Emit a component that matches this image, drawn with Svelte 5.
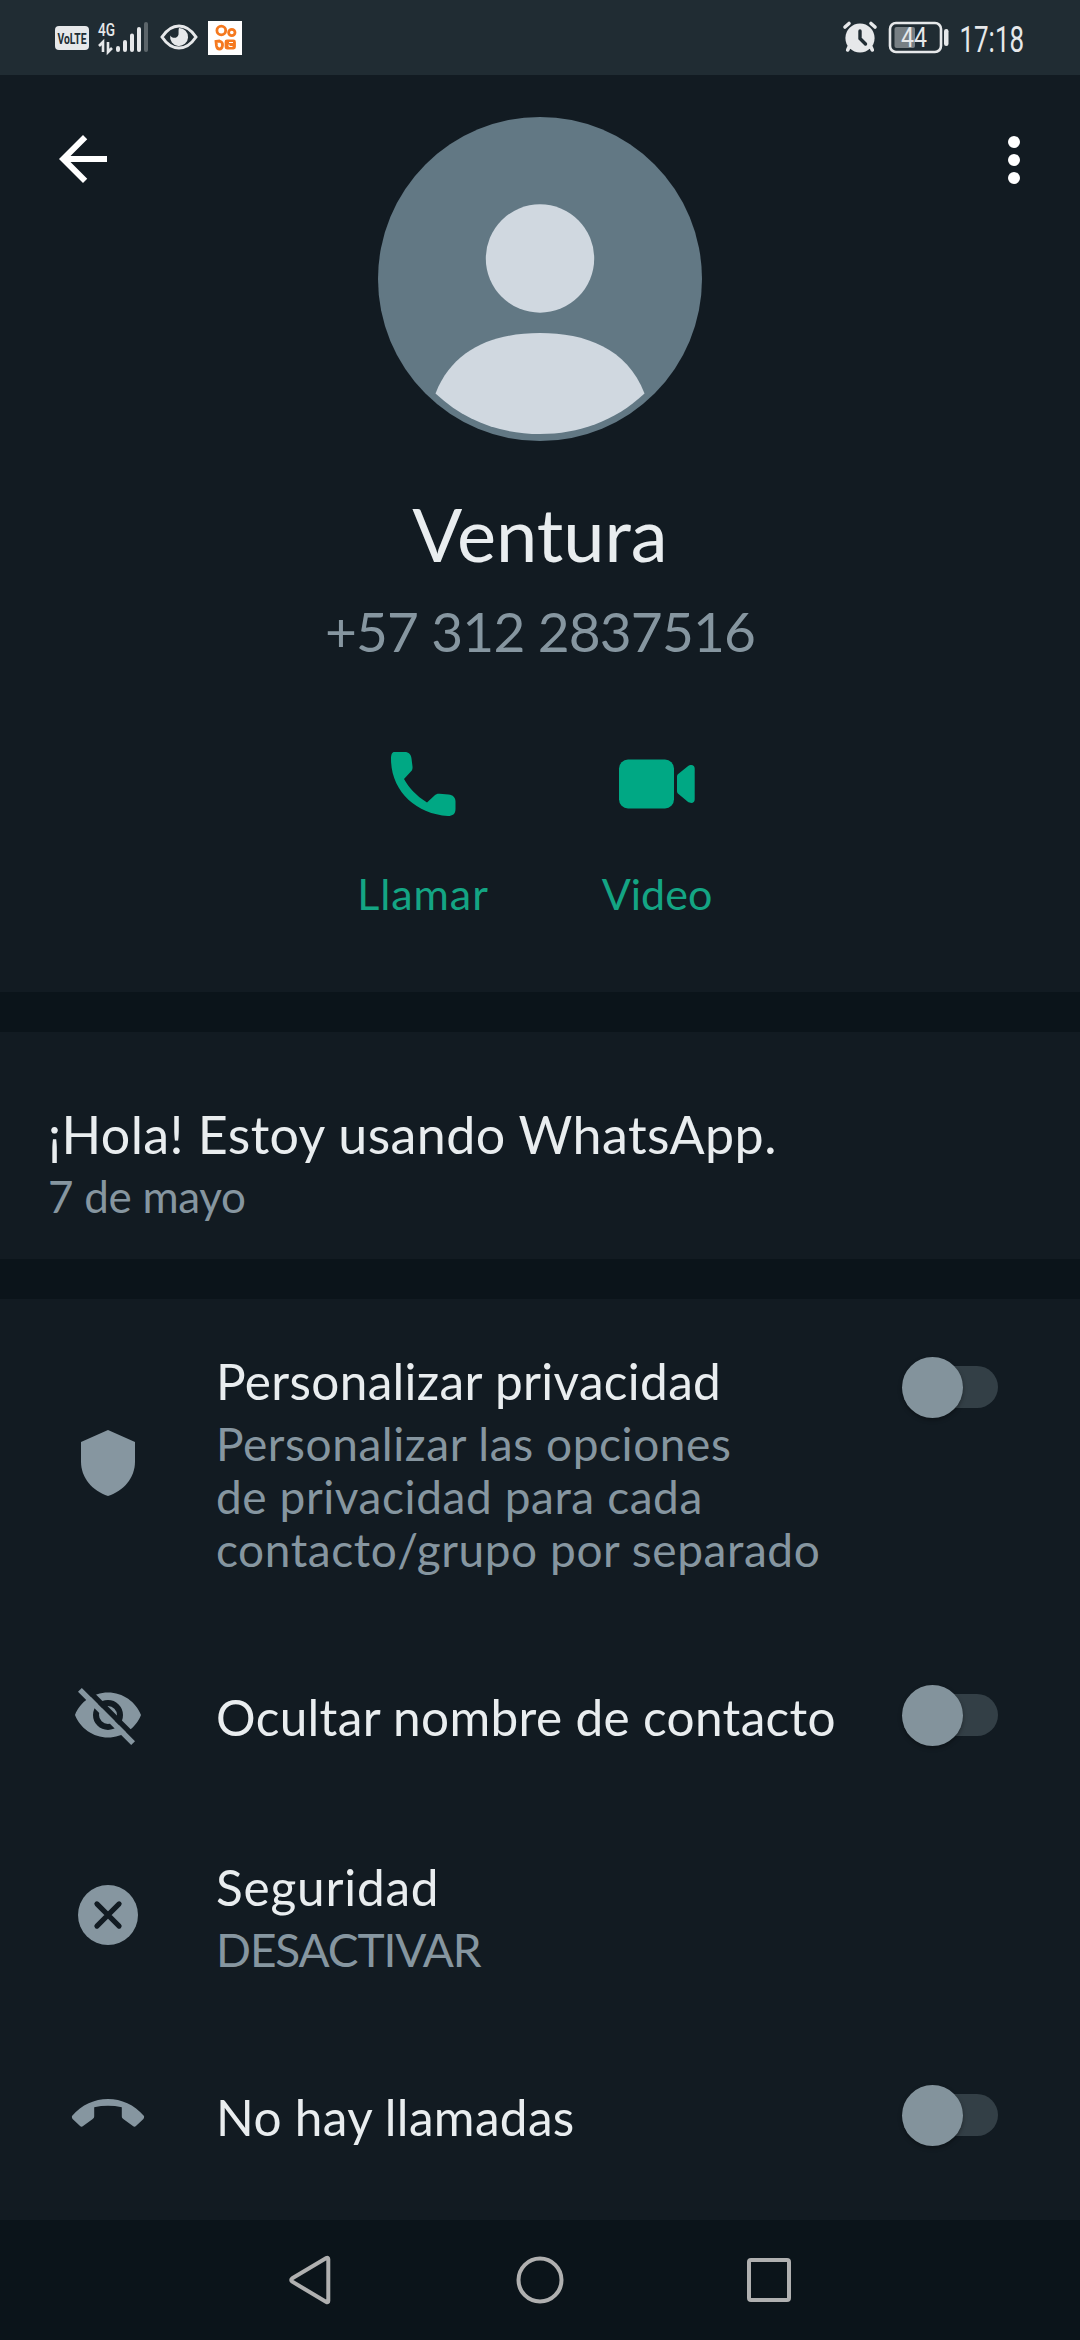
<script lang="ts">
  interface Row {
    icon: 'shield' | 'hidden' | 'close' | 'call';
    title: string;
    detail?: string;
    toggle?: boolean;
  }

  const rows: Row[] = [
    {
      icon: 'shield',
      title: 'Personalizar privacidad',
      detail: 'Personalizar las opciones\nde privacidad para cada\ncontacto/grupo por separado',
      toggle: true
    },
    { icon: 'hidden', title: 'Ocultar nombre de contacto', toggle: true },
    { icon: 'close', title: 'Seguridad', detail: 'DESACTIVAR' },
    { icon: 'call', title: 'No hay llamadas', toggle: true }
  ];

  let enabled = $state(rows.map(() => false));
</script>

<div class="screen">
  <header class="status">
    <svg class="status-left" viewBox="0 0 200 75" aria-hidden="true">
      <rect x="5" y="26" width="34" height="24" rx="4" fill="#e6e8ea" />
      <text class="volte" x="7.5" y="43.5" textLength="29" lengthAdjust="spacingAndGlyphs">VoLTE</text>
      <text class="net" x="48" y="36" textLength="17" lengthAdjust="spacingAndGlyphs">4G</text>
      <path d="M49 46l4-4v10M58 42v10l4-4" fill="none" stroke="#e6e8ea" stroke-width="2.6" />
      <g stroke="#e6e8ea" stroke-width="4" stroke-linecap="round">
        <path d="M68 48v2M75 42v8M82 35.5v14.5M89 29v21" />
        <path d="M96 24v26" opacity="0.3" />
      </g>
      <path d="M112 37c5-7.5 11-11 17-11s12 3.5 17 11c-5 7.500-11 11-17 11s-12-3.500-17-11z" fill="none" stroke="#e6e8ea" stroke-width="3" />
      <path d="M129 28a9 9 0 1 1-8.800 7.500c2 3.500 7.500 3 8.300-1 .3-2.500-.3-4.700.5-6.500z" fill="#e6e8ea" />
      <rect x="158" y="21" width="34" height="34" fill="#fff" />
      <g fill="none" stroke="#f5791f" stroke-width="2.8">
        <circle cx="171.300" cy="30.500" r="4.400" />
        <circle cx="181.800" cy="32.500" r="3.200" />
        <path d="M166 41.500l3.500-.5q3.500 1 3 4.500t-3 3.500q-2.500 0-3-3z" />
        <rect x="176" y="41" width="8.500" height="7" rx="1" fill="#f5791f" />
      </g>
      <path d="M179 42.500h4M179 44.500v2h3.500" fill="none" stroke="#fff" />
    </svg>
    <svg class="status-right" viewBox="0 0 200 75" aria-hidden="true">
      <circle cx="20" cy="38" r="14.6" fill="#e6e8ea" />
      <g fill="none" stroke="#e6e8ea" stroke-width="3.6" stroke-linecap="round">
        <path d="M5 27l4-3.500M35 27l-4-3.500M9 47l-1.300 3M31 47l1.300 3" />
        <path d="M20 31v7.500l5.500 5.500" stroke="#202c33" stroke-width="3.4" />
      </g>
      <rect x="50" y="23" width="51" height="29" rx="6" fill="none" stroke="#e6e8ea" stroke-width="2.6" />
      <rect x="54.5" y="27" width="20.5" height="21" rx="2" fill="#777f84" />
      <rect x="104" y="29" width="4.5" height="17" rx="2.2" fill="#e6e8ea" />
      <text class="level" x="61" y="46.5" textLength="26" lengthAdjust="spacingAndGlyphs">44</text>
      <text class="clock" x="119.5" y="51.5" textLength="64.5" lengthAdjust="spacingAndGlyphs">17:18</text>
    </svg>
  </header>

  <section class="hero">
    <button class="icon-button" aria-label="Atrás">
      <svg viewBox="0 0 24 24"><path d="M20 11H7.830l5.590-5.590L12 4l-8 8 8 8 1.410-1.410L7.830 13H20z" /></svg>
    </button>
    <div class="profile">
      <svg class="avatar" viewBox="0 0 324 324" aria-hidden="true">
        <circle cx="162" cy="162" r="162" fill="#627884" />
        <circle cx="162" cy="141.5" r="54.2" fill="#d0d8e0" />
        <path d="M162 216c45 0 87 15 104.500 60.500-30 28-66 40.500-104.500 40.500s-74.500-12.500-104.500-40.500C75 231 117 216 162 216z" fill="#d0d8e0" />
      </svg>
      <h1>Ventura</h1>
      <p class="phone">+57 312 2837516</p>
      <div class="actions">
        <button class="action call">
          <svg viewBox="0 0 72 72">
            <path d="M11.500 4h10c4.500 0 6.500 2.500 7 6.500l1 8c.2 2-.2 3.500-1.600 5L21 31c5 9 12 16.500 23 23.500l7.500-7c1.500-1.400 3-1.900 5-1.700l9 .7c4.500.4 7 3 7 7v7.500c0 5-3 7-7.500 7C33 66 8 43 8 11c0-4.500 1-7 3.500-7z" transform="translate(-4)" />
          </svg>
          <span>Llamar</span>
        </button>
        <button class="action">
          <svg viewBox="0 0 72 72">
            <rect x="-2" y="11.5" width="55" height="49" rx="9" />
            <path d="M56 28.500c0-1.300.5-2 1.500-2.800l9-7.200c3.500-2.600 7.200-1.600 7.200 2v31c0 3.600-3.700 4.600-7.200 2l-9-7.500c-1-.8-1.500-1.500-1.500-2.800z" />
          </svg>
          <span>Video</span>
        </button>
      </div>
    </div>
    <button class="icon-button more" aria-label="Más opciones">
      <svg viewBox="0 0 24 24"><circle cx="12" cy="6" r="2" /><circle cx="12" cy="12" r="2" /><circle cx="12" cy="18" r="2" /></svg>
    </button>
  </section>

  <section class="about">
    <p class="about-text">¡Hola! Estoy usando WhatsApp.</p>
    <p class="about-date">7 de mayo</p>
  </section>

  <section class="settings">
    {#each rows as row, i}
      <div class="row {row.icon}">
        <svg class="row-icon" viewBox="0 0 24 24" aria-hidden="true">
          {#if row.icon === 'shield'}
            <path d="M12 1L3 5v6.500C3 17 6.800 21.300 12 23c5.200-1.700 9-6 9-11.500V5z" />
          {:else if row.icon === 'hidden'}
            <path fill-rule="evenodd" d="M12 4.500C7 4.500 2.730 7.610 1 12c1.730 4.390 6 7.500 11 7.500s9.270-3.110 11-7.500c-1.730-4.390-6-7.500-11-7.500zM12 17a5 5 0 1 1 0-10 5 5 0 0 1 0 10zM12 9a3 3 0 1 0 0 6 3 3 0 0 0 0-6z" />
            <path d="M4 2.450L22 20.450" stroke="#121b22" stroke-width="1.8" />
            <path d="M2 4.270L3.270 3 21 20.730 19.730 22z" />
          {:else if row.icon === 'close'}
            <circle cx="12" cy="12" r="10" />
            <path d="M8.300 8.300l7.400 7.400M15.700 8.300l-7.400 7.400" stroke="#121b22" stroke-width="1.7" stroke-linecap="round" />
          {:else}
            <path d="M0 12.300C3.300 8.600 7.500 6.700 12 6.700s8.700 1.900 12 5.600c.1.400 0 .7-.2 1l-2.400 2.300c-.4.400-.7.400-1.100.1l-3.100-2.300c-.4-.3-.6-.5-.6-1V9.400c-3-.6-6.200-.6-9.200 0v3c0 .5-.2.700-.6 1l-3.100 2.300c-.4.300-.7.300-1.100-.1L.2 13.300c-.2-.3-.3-.6-.2-1z" />
          {/if}
        </svg>
        <div class="row-text">
          <p class="title">{row.title}</p>
          {#if row.detail}
            <p class="detail">{row.detail}</p>
          {/if}
        </div>
        {#if row.toggle}
          <button
            class="toggle"
            class:on={enabled[i]}
            role="switch"
            aria-checked={enabled[i]}
            aria-label={row.title}
            onclick={() => (enabled[i] = !enabled[i])}
          >
            <span class="thumb"></span>
          </button>
        {/if}
      </div>
    {/each}
  </section>

  <nav class="navbar">
    <svg viewBox="0 0 60 60"><path d="M11.300 28.300L45.300 8.100q2-1 2 1.200v41.400q0 2.200-2 1.200L11.300 31.700q-2.200-1.700 0-3.400z" /></svg>
    <svg viewBox="0 0 60 60"><circle cx="30" cy="30" r="21.5" /></svg>
    <svg viewBox="0 0 60 60"><rect x="10" y="10" width="40" height="40" rx="2" /></svg>
  </nav>
</div>

<style>
  :global(body) {
    margin: 0;
    background: #0b141a;
  }

  .screen {
    display: flex;
    flex-direction: column;
    width: 1080px;
    height: 2340px;
    overflow: hidden;
    background: #0b141a;
    color: #e9edef;
    font-family: Lato, 'Open Sans', sans-serif;
  }

  h1,
  p {
    margin: 0;
    font-weight: 400;
  }

  button {
    padding: 0;
    border: 0;
    background: none;
    color: inherit;
    font-family: inherit;
    cursor: pointer;
  }

  svg {
    display: block;
    overflow: visible;
  }

  .status {
    display: flex;
    justify-content: space-between;
    height: 75px;
    padding: 0 40px 0 50px;
    background: #202c33;
  }

  .status svg {
    width: 200px;
    height: 75px;
  }

  .status text {
    fill: #e6e8ea;
    font-family: Roboto, sans-serif;
  }

  .status .volte {
    fill: #202c33;
    font-size: 15.5px;
    font-weight: 700;
  }

  .status .net {
    font-size: 19px;
    font-weight: 500;
  }

  .status .level {
    font-size: 27px;
  }

  .status .clock {
    font-size: 36px;
  }

  .hero {
    display: flex;
    justify-content: space-between;
    align-items: flex-start;
    box-sizing: border-box;
    height: 917px;
    padding: 42px 30px 0 47px;
    background: #121b22;
  }

  .icon-button {
    width: 72px;
    margin-top: 6px;
  }

  .more {
    margin-top: 7px;
  }

  .icon-button svg {
    width: 72px;
    height: 72px;
    fill: #fff;
  }

  .profile {
    display: flex;
    flex-direction: column;
    align-items: center;
    margin-right: 17px;
  }

  .avatar {
    width: 324px;
    height: 324px;
  }

  h1 {
    margin-top: 48px;
    font-size: 74px;
    line-height: 90px;
  }

  .phone {
    margin-top: 17px;
    color: #8696a0;
    font-size: 55px;
    letter-spacing: -0.85px;
    line-height: 70px;
  }

  .actions {
    display: grid;
    grid-template-columns: 234px 234px;
    margin-top: 82px;
  }

  .action {
    display: flex;
    flex-direction: column;
    align-items: center;
    gap: 48px;
    color: #14a584;
    font-size: 43px;
    line-height: 52px;
  }

  .action.call {
    letter-spacing: 0.9px;
  }

  .action svg {
    width: 72px;
    height: 72px;
    fill: #00a884;
  }

  .about {
    box-sizing: border-box;
    height: 227px;
    margin-top: 40px;
    padding: 71px 48px 0;
    background: #121b22;
  }

  .about-text {
    font-size: 52px;
    letter-spacing: 0.4px;
    line-height: 62px;
  }

  .about-date {
    margin-top: 4px;
    color: #8696a0;
    font-size: 44px;
    letter-spacing: -0.3px;
    line-height: 54px;
  }

  .settings {
    height: 921px;
    margin-top: 40px;
    background: #121b22;
  }

  .row {
    display: grid;
    grid-template-columns: 72px 1fr auto;
    column-gap: 72px;
    align-items: center;
    height: 176px;
    padding: 0 82px 0 72px;
  }

  .row.shield {
    height: 328px;
  }

  .row.close {
    height: 224px;
  }

  .row-icon {
    width: 72px;
    height: 72px;
    fill: #8696a0;
  }

  .row-text {
    padding-top: 3px;
    white-space: nowrap;
  }

  .shield .row-text {
    padding-top: 1px;
  }

  .title {
    font-size: 49.5px;
    letter-spacing: 0.35px;
    line-height: 60px;
  }

  .detail {
    margin-top: 6px;
    color: #8696a0;
    font-size: 46px;
    letter-spacing: 0.57px;
    line-height: 53px;
    white-space: pre;
  }

  .close .title {
    letter-spacing: 0.8px;
  }

  .close .detail {
    letter-spacing: -1.1px;
  }

  .toggle {
    display: flex;
    align-items: center;
    width: 90px;
    height: 42px;
    border-radius: 21px;
    background: #333f46;
  }

  .shield .toggle {
    align-self: start;
    margin-top: 67px;
  }

  .thumb {
    flex-shrink: 0;
    width: 61px;
    height: 61px;
    margin-left: -6px;
    border-radius: 50%;
    background: #83939c;
    box-shadow: 0 2px 4px rgba(0, 0, 0, 0.35);
  }

  .toggle.on .thumb {
    margin-left: 35px;
    background: #00a884;
  }

  .navbar {
    display: flex;
    flex: 1;
    align-items: center;
    justify-content: center;
    gap: 169px;
  }

  .navbar svg {
    width: 60px;
    height: 60px;
    fill: none;
    stroke: #b0b0b0;
    stroke-width: 4;
  }
</style>
